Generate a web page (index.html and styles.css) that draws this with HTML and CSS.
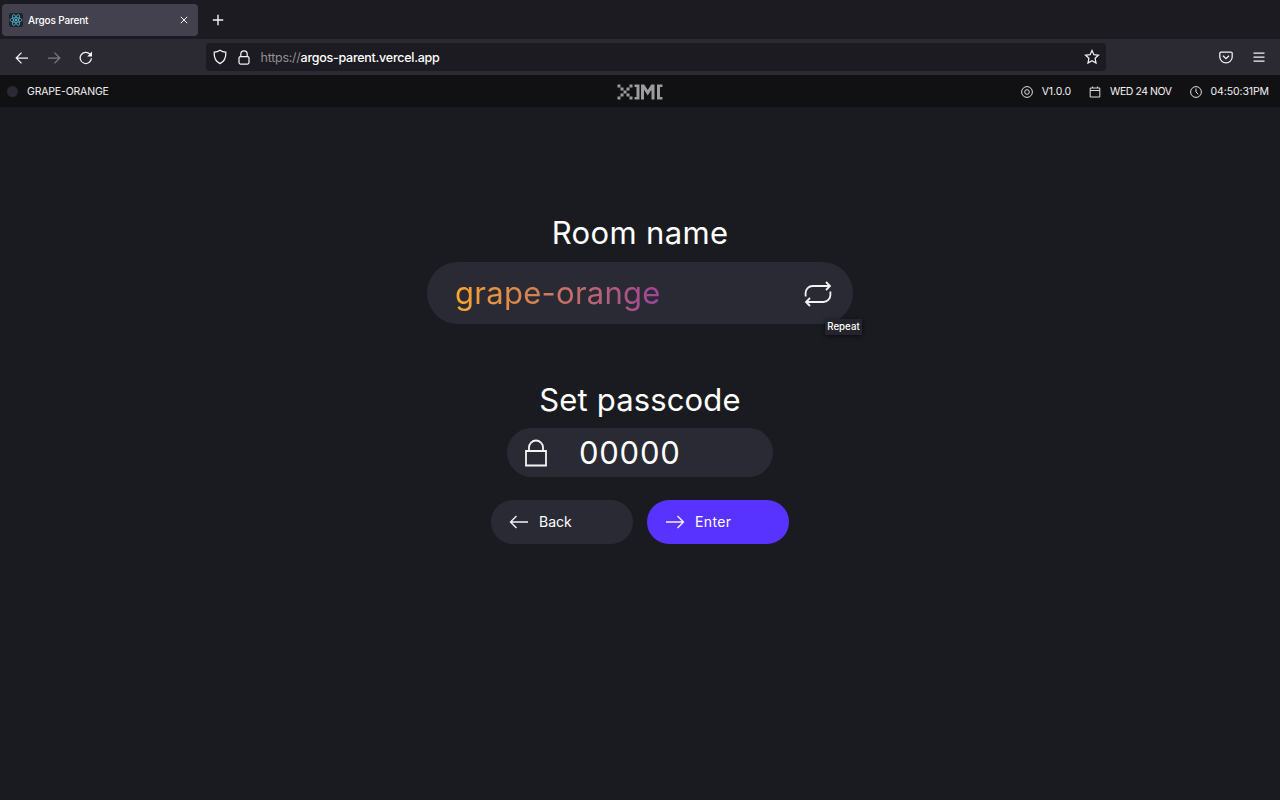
FILE: index.html
```html
<!DOCTYPE html>
<html lang="en">
<head>
<meta charset="utf-8">
<title>Argos Parent</title>
<link rel="stylesheet" href="styles.css">
</head>
<body>
<header class="tabs">
  <div class="tab">
    <svg class="favicon" width="14" height="14" viewBox="0 0 14 14"><rect width="14" height="14" rx="2" fill="#20232a"/><g fill="none" stroke="#4fb3cf" stroke-width=".8"><ellipse cx="7" cy="7" rx="6" ry="2.3"/><ellipse cx="7" cy="7" rx="6" ry="2.3" transform="rotate(60 7 7)"/><ellipse cx="7" cy="7" rx="6" ry="2.3" transform="rotate(120 7 7)"/></g><circle cx="7" cy="7" r="1.1" fill="#61dafb"/></svg>
    <span class="tab-title">Argos Parent</span>
    <svg class="close" width="8" height="8" viewBox="0 0 8 8"><path d="M.8.8l6.4 6.4M7.2.8L.8 7.2"/></svg>
  </div>
  <svg class="plus" width="12" height="12" viewBox="0 0 12 12"><path d="M6 .8v10.4M.8 6h10.4"/></svg>
</header>
<nav class="toolbar">
  <div class="nav-buttons">
    <svg width="14" height="14" viewBox="0 0 14 14"><path d="M13 7H1.3M6.5 1.6L1.2 7l5.3 5.4"/></svg>
    <svg class="dim" width="14" height="14" viewBox="0 0 14 14"><path d="M1 7h11.7M7.5 1.6L12.8 7l-5.3 5.4"/></svg>
    <svg width="14" height="14" viewBox="0 0 14 14"><path d="M12.4 7.2A5.6 5.6 0 1 1 10.9 3.1"/><path d="M13 .6v4.8H8.2z" fill="#fbfbfe" stroke="none"/></svg>
  </div>
  <div class="address">
    <svg class="shield" width="14" height="16" viewBox="0 0 14 16"><path d="M7 1.2c1.700 1.300 3.600 1.900 5.800 2 .3 4.900-1.400 9.200-5.800 11.400C2.600 12.400.9 8.100 1.200 3.200 3.400 3.100 5.300 2.500 7 1.200z"/></svg>
    <svg class="padlock" width="12" height="15" viewBox="0 0 12 15"><rect x="1" y="6.500" width="10" height="7.500" rx="1.500"/><path d="M2.800 6.500V4a3.200 3.200 0 0 1 6.400 0v2.500"/></svg>
    <span class="url"><span class="scheme">https://</span>argos-parent.vercel.app</span>
    <svg class="star" width="16" height="16" viewBox="0 0 16 16"><path d="M8 1.500l1.900 4.200 4.500.5-3.300 3.100.9 4.700L8 11.700 4 14l.9-4.700-3.300-3.100 4.500-.5z"/></svg>
  </div>
  <svg class="pocket" width="14" height="13" viewBox="0 0 14 13"><path d="M2 1h10a1.200 1.200 0 0 1 1.200 1.200V6A6.200 5.800 0 0 1 .8 6V2.200A1.200 1.200 0 0 1 2 1zM4 4.700l3 2.900 3-2.900"/></svg>
  <svg class="menu" width="12" height="10" viewBox="0 0 12 10"><path d="M.5 1h11M.5 5h11M.5 9h11"/></svg>
</nav>
<div class="status">
  <div class="room"><i class="dot"></i><span class="t-room">GRAPE-ORANGE</span></div>
  <svg class="logo" width="46" height="16" viewBox="0 0 46 16"><path d="M.5.500h3v3h-3zM12.500.500h3v3h-3zM3.500 3.500h3v3h-3zM9.500 3.500h3v3h-3zM6.500 6.500h3v3h-3zM3.500 9.500h3v3h-3zM9.500 9.500h3v3h-3zM.5 12.500h3v3h-3zM12.500 12.500h3v3h-3zM17.500.500h5v15h-5v-2.500h2V3h-2zM24 .5h3.200L30.700 6 34.300.500h3.200v15h-3V5.800L30.700 11.500 27 5.800v9.700h-3zM40 .5h5.500V3h-2.500v10h2.500v2.500H40z"/></svg>
  <div class="info">
    <svg width="12" height="12" viewBox="0 0 12 12"><circle cx="6" cy="6" r="5.400"/><circle cx="6" cy="6" r="2.300"/></svg><span class="t-version">V1.0.0</span>
    <svg width="12" height="12" viewBox="0 0 12 12"><path d="M1.200 2h9.600v9H1.200zM1.200 4.500h9.600M3.500 .5V2M8.500 .5V2"/></svg><span class="t-date">WED 24 NOV</span>
    <svg width="12" height="12" viewBox="0 0 12 12"><circle cx="6" cy="6" r="5.400"/><path d="M6 2.500V6l2.300 2.300"/></svg><span class="t-time">04:50:31PM</span>
  </div>
</div>
<main class="form">
  <h1 class="heading">Room name</h1>
  <div class="name-field">
    <span class="name">grape-orange</span>
    <svg class="repeat" width="28" height="26" viewBox="0 0 28 26"><path d="M1.600 15.500V12a7 7 0 0 1 7-7h17M22 1l4 4-4 4M26.400 10.500V14a7 7 0 0 1-7 7h-17M6 17l-4 4 4 4"/></svg>
    <span class="tooltip">Repeat</span>
  </div>
  <h2 class="heading second">Set passcode</h2>
  <div class="code-field">
    <svg width="22" height="28" viewBox="0 0 22 28"><path d="M1 12h20v14.500H1zM4 12V8.500a7 7 0 0 1 14 0V12"/></svg>
    <span class="code">00000</span>
  </div>
  <div class="actions">
    <button class="button"><svg width="20" height="14" viewBox="0 0 20 14"><path d="M19 7H1.500M7.500 1l-6 6 6 6"/></svg><span class="t-back">Back</span></button>
    <button class="button primary"><svg width="20" height="14" viewBox="0 0 20 14"><path d="M1 7h17.500M12.500 1l6 6-6 6"/></svg><span class="t-enter">Enter</span></button>
  </div>
</main>
</body>
</html>
```
FILE: styles.css
```css
* { box-sizing: border-box; }
body { margin: 0; width: 1280px; height: 800px; overflow: hidden; background: #1a1b20; color: #fff; font-family: Inter, "Liberation Sans", sans-serif; }
svg { display: block; flex: none; fill: none; stroke: #f3f3f6; stroke-width: 1.25; }
.tabs { height: 39px; display: flex; align-items: center; background: #1c1b22; padding: 1px 0 0 2px; }
.tab { width: 196px; height: 32px; border-radius: 4px; background: #42414d; display: flex; align-items: center; padding: 0 10px 0 7px; }
.favicon { stroke: none; }
.tab-title { flex: 1; margin-left: 5px; font-size: 10px; line-height: 16px; font-weight: 500; letter-spacing: -.15px; }
.close { stroke-width: 1; }
.plus { margin-left: 14px; stroke-width: 1.4; }
.toolbar { height: 36px; background: #2b2a33; display: flex; align-items: center; padding: 0 15px 0 15px; }
.nav-buttons { display: flex; gap: 18px; width: 191px; padding-top: 1px; }
.dim { opacity: .4; }
.address { width: 900px; height: 28px; border-radius: 4px; background: #1c1b22; display: flex; align-items: center; padding: 0 6px 0 7px; }
.padlock { margin-left: 11px; }
.url { flex: 1; margin-left: 10.5px; padding-top: 1px; font-size: 12.5px; line-height: 18px; font-weight: 500; letter-spacing: -.26px; }
.scheme { color: #8f8f98; font-weight: 400; }
.pocket { margin-left: 113px; }
.menu { margin-left: 20px; }
.status { height: 32px; background: #111113; display: grid; grid-template-columns: 1fr 46px 1fr; align-items: center; font-size: 10.5px; line-height: 16px; color: #f2f2f2; padding: 1px 11px 0 7px; }
.room { display: flex; align-items: center; gap: 9px; }
.t-room, .t-version, .t-date, .t-time { padding-top: 1px; }
.t-room { letter-spacing: -.17px; }
.t-version { letter-spacing: -.1px; }
.t-date { letter-spacing: -.45px; }
.t-time { letter-spacing: -.1px; }
.dot { width: 11px; height: 11px; border-radius: 50%; background: #2a2a34; }
.logo { fill: #9c9c9f; stroke: none; transform: translateX(2px); }
.info { display: flex; align-items: center; justify-content: flex-end; }
.info svg { stroke-width: 1; stroke: #ddd; margin-right: 9px; }
.info svg:not(:first-child) { margin-left: 18px; }
.form { display: flex; flex-direction: column; align-items: center; padding-top: 106px; }
.heading { margin: 0; height: 40px; line-height: 40px; font-size: 31px; font-weight: 400; letter-spacing: .35px; }
.name-field { position: relative; width: 426px; height: 62px; margin-top: 9px; border-radius: 31px; background: #2a2a34; display: flex; align-items: center; justify-content: space-between; padding: 1px 21px 0 28px; }
.name { margin-bottom: 2px; font-size: 31px; line-height: 40px; letter-spacing: .27px; background: linear-gradient(90deg, #f9a52b, #9d4499); -webkit-background-clip: text; background-clip: text; color: transparent; }
.repeat { stroke-width: 1.8; }
.tooltip { position: absolute; left: 398px; top: 57px; width: 37px; height: 16px; background: #25242c; font-size: 9.7px; line-height: 16px; font-weight: 500; text-align: center; box-shadow: 0 1px 5px #0008; }
.second { margin-top: 56px; letter-spacing: .15px; }
.code-field { width: 266px; height: 49px; margin-top: 8px; border-radius: 25px; background: #2a2a34; display: flex; align-items: center; padding-left: 18px; }
.code-field svg { stroke-width: 1.8; }
.code { margin-left: 32px; font-size: 31px; line-height: 40px; letter-spacing: .75px; }
.actions { display: flex; gap: 14px; margin-top: 23px; }
.button { width: 142px; height: 44px; border: 0; border-radius: 22px; background: #2a2a34; color: #fff; font: 14px/20px Inter, sans-serif; display: flex; align-items: center; padding: 0 18px; gap: 10px; }
.button svg { stroke-width: 1.4; }
.t-enter { letter-spacing: .35px; }
.primary { background: #5833ff; }
```
